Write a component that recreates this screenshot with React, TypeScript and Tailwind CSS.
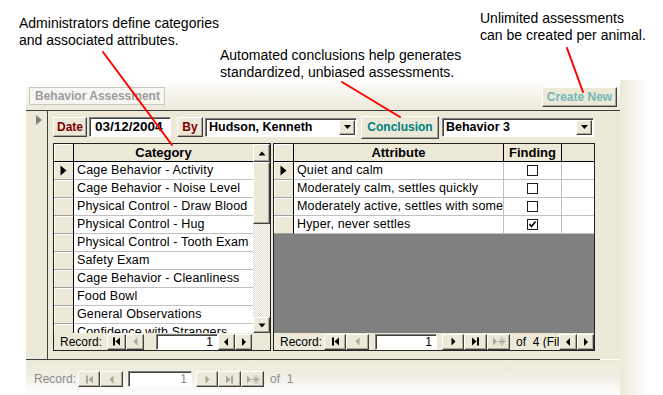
import React from 'react';

const raised =
  'border border-t-white border-l-white border-r-[#404040] border-b-[#404040] shadow-[inset_-1px_-1px_0_#aca899] bg-[#ECE9D8]';
const sunken =
  'border border-t-[#808080] border-l-[#808080] border-r-white border-b-white shadow-[inset_1px_1px_0_#404040] bg-white';
const selectorCell =
  'bg-[#ECE9D8] border-r border-r-black border-b border-b-[#a0a0a0] shadow-[inset_1px_1px_0_#ffffff]';

const categories = [
  'Cage Behavior - Activity',
  'Cage Behavior - Noise Level',
  'Physical Control - Draw Blood',
  'Physical Control - Hug',
  'Physical Control - Tooth Exam',
  'Safety Exam',
  'Cage Behavior - Cleanliness',
  'Food Bowl',
  'General Observations',
  'Confidence with Strangers',
];

const attributes = [
  { text: 'Quiet and calm', checked: false },
  { text: 'Moderately calm, settles quickly', checked: false },
  { text: 'Moderately active, settles with some difficulty', checked: false },
  { text: 'Hyper, never settles', checked: true },
];

type GlyphKind = 'first' | 'prev' | 'next' | 'last' | 'new' | 'left' | 'right' | 'up' | 'down';

function Glyph({ kind, color = '#000' }: { kind: GlyphKind; color?: string }) {
  if (kind === 'first')
    return (
      <svg width="9" height="9" viewBox="0 0 9 9">
        <rect x="1" y="0.5" width="2" height="8" fill={color} />
        <polygon points="8,0.5 8,8.5 3.5,4.5" fill={color} />
      </svg>
    );
  if (kind === 'prev')
    return (
      <svg width="9" height="9" viewBox="0 0 9 9">
        <polygon points="6.5,0.5 6.5,8.5 2.5,4.5" fill={color} />
      </svg>
    );
  if (kind === 'next')
    return (
      <svg width="9" height="9" viewBox="0 0 9 9">
        <polygon points="2.5,0.5 2.5,8.5 6.5,4.5" fill={color} />
      </svg>
    );
  if (kind === 'last')
    return (
      <svg width="9" height="9" viewBox="0 0 9 9">
        <polygon points="1,0.5 1,8.5 5.5,4.5" fill={color} />
        <rect x="6" y="0.5" width="2" height="8" fill={color} />
      </svg>
    );
  if (kind === 'new')
    return (
      <svg width="14" height="9" viewBox="0 0 14 9">
        <polygon points="1,0.5 1,8.5 5,4.5" fill={color} />
        <g stroke={color} strokeWidth="1">
          <line x1="10" y1="0" x2="10" y2="9" />
          <line x1="5.5" y1="4.5" x2="14" y2="4.5" />
          <line x1="7" y1="1.5" x2="13" y2="7.5" />
          <line x1="13" y1="1.5" x2="7" y2="7.5" />
        </g>
      </svg>
    );
  if (kind === 'left')
    return (
      <svg width="5" height="8" viewBox="0 0 5 8">
        <polygon points="4,0 4,8 0,4" fill={color} />
      </svg>
    );
  if (kind === 'right')
    return (
      <svg width="5" height="8" viewBox="0 0 5 8">
        <polygon points="1,0 1,8 5,4" fill={color} />
      </svg>
    );
  if (kind === 'up')
    return (
      <svg width="8" height="5" viewBox="0 0 8 5">
        <polygon points="0.5,4.5 7.5,4.5 4,0.5" fill={color} />
      </svg>
    );
  return (
    <svg width="8" height="5" viewBox="0 0 8 5">
      <polygon points="0.5,0.5 7.5,0.5 4,4.5" fill={color} />
    </svg>
  );
}

function NavBtn({ kind, w, disabled }: { kind: GlyphKind; w: string; disabled?: boolean }) {
  return (
    <div className={`${raised} ${w} h-[16px] flex items-center justify-center shrink-0`}>
      <Glyph kind={kind} color={disabled ? '#a8a8a0' : '#000'} />
    </div>
  );
}

function Combo({ value, w }: { value: string; w: string }) {
  return (
    <div className={`${sunken} ${w} h-[19px] flex items-center`}>
      <div className="flex-1 pl-[3px] text-[12.5px] font-bold leading-none whitespace-nowrap overflow-hidden">
        {value}
      </div>
      <div className={`${raised} w-[16px] h-[15px] mr-px flex items-center justify-center`}>
        <svg width="7" height="4" viewBox="0 0 7 4">
          <polygon points="0,0 7,0 3.5,4" fill="#000" />
        </svg>
      </div>
    </div>
  );
}

function RecordBox({ w, gray }: { w: string; gray?: boolean }) {
  return (
    <div
      className={`${sunken} ${w} h-[16px] flex items-center justify-end pr-[4px] text-[12px] leading-none ${
        gray ? 'text-[#8c8c8c]' : 'text-black'
      }`}
    >
      1
    </div>
  );
}

function CategoryPanel() {
  return (
    <div className="w-[218px] h-[208px] border border-[#222] bg-[#ECE9D8] flex flex-col">
      <div className="flex h-[189px]">
        <div className="w-[199px] flex flex-col overflow-hidden">
          <div className="flex h-[18px] border-b border-b-black shrink-0">
            <div className="w-[20px] border-r border-r-black shadow-[inset_1px_1px_0_#ffffff]" />
            <div className="flex-1 flex items-center justify-center text-[13px] font-bold">Category</div>
          </div>
          {categories.map((c, i) => (
            <div key={c} className="flex h-[18px] shrink-0">
              <div className={`${selectorCell} w-[20px] flex items-center justify-center`}>
                {i === 0 && (
                  <svg width="7" height="11" viewBox="0 0 7 11">
                    <polygon points="0.5,0.5 6.5,5.5 0.5,10.5" fill="#000" />
                  </svg>
                )}
              </div>
              <div className="flex-1 bg-white border-b border-b-[#c0c0c0] pl-[3px] text-[12.5px] tracking-[0.15px] leading-[17px] whitespace-nowrap overflow-hidden">
                {c}
              </div>
            </div>
          ))}
        </div>
        <div className="w-[17px] flex flex-col">
          <div className={`${raised} h-[18px] flex items-center justify-center`}>
            <Glyph kind="up" />
          </div>
          <div className={`${raised} h-[62px]`} />
          <div className="flex-1 bg-[repeating-conic-gradient(#ffffff_0%_25%,#dcd9cc_0%_50%)] bg-[length:2px_2px]" />
          <div className={`${raised} h-[16px] flex items-center justify-center`}>
            <Glyph kind="down" />
          </div>
        </div>
      </div>
      <div className="h-[17px] flex items-center text-[12px] leading-none">
        <span className="ml-[6px] w-[47px]">Record:</span>
        <NavBtn kind="first" w="w-[19px]" />
        <NavBtn kind="prev" w="w-[18px]" disabled />
        <div className="w-[12px]" />
        <RecordBox w="w-[62px]" />
        <NavBtn kind="left" w="w-[17px]" />
        <NavBtn kind="right" w="w-[17px]" />
      </div>
    </div>
  );
}

function AttributePanel() {
  return (
    <div className="w-[322px] h-[208px] border border-[#222] bg-[#ECE9D8] flex flex-col">
      <div className="h-[189px] flex flex-col bg-[#808080] overflow-hidden">
        <div className="flex h-[18px] border-b border-b-black bg-[#ECE9D8] shrink-0 text-[13px] font-bold">
          <div className="w-[20px] border-r border-r-black shadow-[inset_1px_1px_0_#ffffff]" />
          <div className="w-[210px] border-r border-r-black flex items-center justify-center">Attribute</div>
          <div className="w-[58px] border-r border-r-black flex items-center justify-center">Finding</div>
          <div className="flex-1" />
        </div>
        {attributes.map((a, i) => (
          <div key={a.text} className="flex h-[18px] shrink-0">
            <div className={`${selectorCell} w-[20px] flex items-center justify-center`}>
              {i === 0 && (
                <svg width="7" height="11" viewBox="0 0 7 11">
                  <polygon points="0.5,0.5 6.5,5.5 0.5,10.5" fill="#000" />
                </svg>
              )}
            </div>
            <div className="w-[210px] bg-white border-b border-b-[#c0c0c0] border-r border-r-[#c0c0c0] pl-[3px] text-[12.5px] tracking-[0.15px] leading-[17px] whitespace-nowrap overflow-hidden">
              {a.text}
            </div>
            <div className="w-[58px] bg-white border-b border-b-[#c0c0c0] border-r border-r-[#c0c0c0] flex items-center justify-center">
              <div className="w-[11px] h-[11px] border border-[#1c1c1c] bg-white flex items-center justify-center">
                {a.checked && (
                  <svg width="7" height="7" viewBox="0 0 7 7">
                    <polyline points="0.5,3 2.5,5.5 6.5,0.5" fill="none" stroke="#000" strokeWidth="1.6" />
                  </svg>
                )}
              </div>
            </div>
            <div className="flex-1 bg-white border-b border-b-[#c0c0c0]" />
          </div>
        ))}
      </div>
      <div className="h-[17px] flex items-center text-[12px] leading-none">
        <span className="ml-[6px] w-[44px]">Record:</span>
        <NavBtn kind="first" w="w-[22px]" />
        <NavBtn kind="prev" w="w-[23px]" disabled />
        <div className="w-[6px]" />
        <RecordBox w="w-[62px]" />
        <div className="w-[5px]" />
        <NavBtn kind="next" w="w-[22px]" />
        <NavBtn kind="last" w="w-[23px]" />
        <NavBtn kind="new" w="w-[23px]" disabled />
        <span className="ml-[6px] w-[43px] whitespace-nowrap overflow-hidden">of&nbsp; 4 (Filtered)</span>
        <NavBtn kind="left" w="w-[18px]" />
        <NavBtn kind="right" w="w-[17px]" />
      </div>
    </div>
  );
}

export default function App() {
  return (
    <div className="relative w-[663px] h-[395px] overflow-hidden bg-white font-['Liberation_Sans',Arial,sans-serif] text-black">
      {/* Callouts */}
      <div className="flex h-[80px] text-[14px] leading-[17px]">
        <div className="ml-[19px] mt-[15px] w-[201px]">
          Administrators define categories
          <br />
          and associated attributes.
        </div>
        <div className="mt-[47px] w-[260px]">
          Automated conclusions help generates
          <br />
          standardized, unbiased assessments.
        </div>
        <div className="mt-[10px]">
          Unlimited assessments
          <br />
          can be created per animal.
        </div>
      </div>

      {/* Access form */}
      <div className="flex h-[315px]">
        <div className="ml-[26px] w-[594px] flex flex-col">
          <div className="h-[30px] bg-linear-to-b from-white to-[#ECE9D8] flex items-start justify-between pt-[7px] px-[3px]">
            <div className="w-[136px] h-[18px] border border-[#c8c8c0] bg-[#f7f6f1] flex items-center pl-[5px] text-[12px] font-bold text-[#9c9c9c]">
              Behavior Assessment
            </div>
            <div className={`${raised} w-[75px] h-[20px] flex items-center justify-center text-[12px] font-bold text-[#74b8b8]`}>
              Create New
            </div>
          </div>

          <div className="h-[249px] flex bg-[#ECE9D8] border-t border-t-[#404040]">
            <div className="w-[22px] border-r border-r-[#404040] pt-[4px] pl-[10px]">
              <svg width="6" height="10" viewBox="0 0 6 10">
                <polygon points="0,0 6,5 0,10" fill="#808080" />
              </svg>
            </div>
            <div className="flex-1 flex flex-col pl-[5px]">
              <div className="flex items-center h-[20px] mt-[6px]">
                <div className={`${raised} w-[34px] h-[20px] flex items-center justify-center text-[12px] font-bold text-[#800000]`}>
                  Date
                </div>
                <div className={`${sunken} ml-[2px] w-[82px] h-[20px] flex items-center pl-[5px] text-[13.5px] font-bold`}>
                  03/12/2004
                </div>
                <div className={`${raised} ml-[6px] w-[26px] h-[20px] flex items-center justify-center text-[12px] font-bold text-[#800000]`}>
                  By
                </div>
                <div className="ml-[2px]">
                  <Combo value="Hudson, Kenneth" w="w-[152px]" />
                </div>
                <div className={`${raised} ml-[4px] w-[78px] h-[23px] flex items-center justify-center text-[12px] font-bold text-[#008080]`}>
                  Conclusion
                </div>
                <div className="ml-[3px]">
                  <Combo value="Behavior 3" w="w-[152px]" />
                </div>
              </div>
              <div className="flex gap-[2px] mt-[6px]">
                <CategoryPanel />
                <AttributePanel />
              </div>
            </div>
          </div>
          <div className="w-[574px] h-px bg-[#404040]" />

          <div className="flex-1 bg-linear-to-b from-[#ECE9D8] via-[#f1efe6] to-white">
            <div className="h-[16px] mt-[11px] flex items-center text-[12px] leading-none text-[#8c8c8c]">
              <span className="ml-[8px] w-[44px]">Record:</span>
              <NavBtn kind="first" w="w-[22px]" disabled />
              <NavBtn kind="prev" w="w-[23px]" disabled />
              <div className="w-[5px]" />
              <RecordBox w="w-[64px]" gray />
              <div className="w-[4px]" />
              <NavBtn kind="next" w="w-[22px]" disabled />
              <NavBtn kind="last" w="w-[23px]" disabled />
              <NavBtn kind="new" w="w-[23px]" disabled />
              <span className="ml-[6px]">of&nbsp; 1</span>
            </div>
          </div>
        </div>
        <div className="w-[30px] bg-linear-to-r from-[#ECE9D8] to-white" />
      </div>

      {/* Callout pointers */}
      <svg className="absolute inset-0 pointer-events-none" width="663" height="395" viewBox="0 0 663 395">
        <g stroke="#ff0000" strokeWidth="2" strokeLinecap="round">
          <line x1="103" y1="52" x2="172" y2="145" />
          <line x1="342" y1="82" x2="400" y2="117" />
          <line x1="567" y1="48" x2="583" y2="92" />
        </g>
      </svg>
    </div>
  );
}
